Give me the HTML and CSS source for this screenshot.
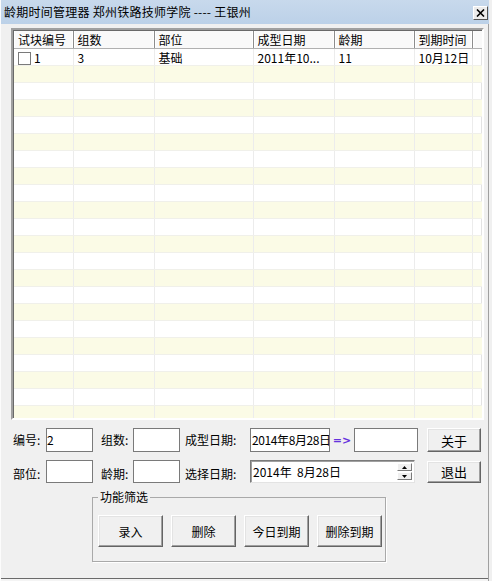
FILE: index.html
```html
<!DOCTYPE html>
<html lang="zh-CN">
<head>
  <meta charset="UTF-8">
  <title>龄期时间管理器</title>
  <link rel="stylesheet" href="styles.css">
</head>
<body>
  <div class="window">
    <div class="titlebar">
      <span class="title">龄期时间管理器 郑州铁路技师学院 ---- 王银州</span>
      <span class="close-btn">
        <svg width="9" height="8" viewBox="0 0 9 8"><path d="M1 0.5 L8 7.5 M8 0.5 L1 7.5" stroke="#000" stroke-width="1.6"/></svg>
      </span>
    </div>

    <div class="client">
      <!-- sample list -->
      <div class="listview">
        <table class="grid">
          <colgroup>
            <col style="width:59px"><col style="width:81px"><col style="width:99px">
            <col style="width:81px"><col style="width:80px"><col style="width:58px"><col>
          </colgroup>
          <thead>
            <tr><th>试块编号</th><th>组数</th><th>部位</th><th>成型日期</th><th>龄期</th><th>到期时间</th><th class="filler"></th></tr>
          </thead>
          <tbody>
            <tr><td><span class="check"></span>1</td><td>3</td><td>基础</td><td>2011年10...</td><td>11</td><td>10月12日</td><td class="filler"></td></tr>
            <tr><td></td><td></td><td></td><td></td><td></td><td></td><td class="filler"></td></tr>
            <tr><td></td><td></td><td></td><td></td><td></td><td></td><td class="filler"></td></tr>
            <tr><td></td><td></td><td></td><td></td><td></td><td></td><td class="filler"></td></tr>
            <tr><td></td><td></td><td></td><td></td><td></td><td></td><td class="filler"></td></tr>
            <tr><td></td><td></td><td></td><td></td><td></td><td></td><td class="filler"></td></tr>
            <tr><td></td><td></td><td></td><td></td><td></td><td></td><td class="filler"></td></tr>
            <tr><td></td><td></td><td></td><td></td><td></td><td></td><td class="filler"></td></tr>
            <tr><td></td><td></td><td></td><td></td><td></td><td></td><td class="filler"></td></tr>
            <tr><td></td><td></td><td></td><td></td><td></td><td></td><td class="filler"></td></tr>
            <tr><td></td><td></td><td></td><td></td><td></td><td></td><td class="filler"></td></tr>
            <tr><td></td><td></td><td></td><td></td><td></td><td></td><td class="filler"></td></tr>
            <tr><td></td><td></td><td></td><td></td><td></td><td></td><td class="filler"></td></tr>
            <tr><td></td><td></td><td></td><td></td><td></td><td></td><td class="filler"></td></tr>
            <tr><td></td><td></td><td></td><td></td><td></td><td></td><td class="filler"></td></tr>
            <tr><td></td><td></td><td></td><td></td><td></td><td></td><td class="filler"></td></tr>
            <tr><td></td><td></td><td></td><td></td><td></td><td></td><td class="filler"></td></tr>
            <tr><td></td><td></td><td></td><td></td><td></td><td></td><td class="filler"></td></tr>
            <tr><td></td><td></td><td></td><td></td><td></td><td></td><td class="filler"></td></tr>
            <tr><td></td><td></td><td></td><td></td><td></td><td></td><td class="filler"></td></tr>
            <tr><td></td><td></td><td></td><td></td><td></td><td></td><td class="filler"></td></tr>
            <tr><td></td><td></td><td></td><td></td><td></td><td></td><td class="filler"></td></tr>
            <tr><td></td><td></td><td></td><td></td><td></td><td></td><td class="filler"></td></tr>
          </tbody>
        </table>
      </div>

      <!-- entry form -->
      <div class="form-row">
        <span class="lbl lbl-first">编号:</span>
        <span class="field field-id">2</span>
        <span class="lbl lbl-mid">组数:</span>
        <span class="field"></span>
        <span class="lbl lbl-date">成型日期:</span>
        <span class="field field-made">2014年8月28日</span>
        <span class="arrow">=&gt;</span>
        <span class="field field-due"></span>
        <button class="btn btn-side">关于</button>
      </div>
      <div class="form-row row-second">
        <span class="lbl lbl-first">部位:</span>
        <span class="field"></span>
        <span class="lbl lbl-mid">龄期:</span>
        <span class="field"></span>
        <span class="lbl lbl-date">选择日期:</span>
        <span class="datepicker">
          <span class="date-text">2014年&nbsp;&nbsp;8月28日</span>
          <span class="spin">
            <span class="spin-btn"><svg width="5" height="3" viewBox="0 0 5 3"><path d="M2.5 0 L5 3 L0 3 Z" fill="#000"/></svg></span>
            <span class="spin-btn"><svg width="5" height="3" viewBox="0 0 5 3"><path d="M0 0 L5 0 L2.5 3 Z" fill="#000"/></svg></span>
          </span>
        </span>
        <button class="btn btn-side btn-quit">退出</button>
      </div>

      <fieldset class="groupbox">
        <legend>功能筛选</legend>
        <div class="group-buttons">
          <button class="btn btn-big">录入</button>
          <button class="btn btn-big">删除</button>
          <button class="btn btn-big">今日到期</button>
          <button class="btn btn-big">删除到期</button>
        </div>
      </fieldset>
    </div>
  </div>
</body>
</html>
```

FILE: styles.css
```css
html, body {
  margin: 0;
  padding: 0;
}
body {
  font-family: "SimSun", "Noto Sans CJK SC", sans-serif;
  font-size: 12px;
  color: #000;
  background: #f0f0f0;
}
.window {
  width: 492px;
  height: 581px;
  box-sizing: border-box;
  background: #f0f0f0;
  border-left: 1px solid #fcfcfc;
  border-right: 3px solid #f0f0f0;
  box-shadow: inset -1px 0 #a0a0a0, inset 0 -2px #f4f4f4, inset 0 -3px #6a6a6a;
  overflow: hidden;
}
.titlebar {
  height: 24px;
  display: flex;
  align-items: center;
  justify-content: space-between;
  padding: 0 1px 0 3px;
  background: linear-gradient(#c8d9ec, #bcd1e8);
}
.title {
  font-size: 12px;
  line-height: 14px;
  letter-spacing: 0.25px;
}
.close-btn {
  width: 15px;
  height: 14px;
  box-sizing: border-box;
  display: flex;
  align-items: center;
  justify-content: center;
  margin-top: 1px;
  background: #ececec;
  border: 1px solid;
  border-color: #fff #555 #555 #fff;
}

.client {
  padding: 4px 0 0 10px;
}
.listview {
  width: 473px;
  height: 392px;
  box-sizing: border-box;
  border: 2px solid;
  border-color: #a0a0a0 #fff #fff #a0a0a0;
  box-shadow: inset 1px 1px #696969, inset -1px -1px #e3e3e3;
  background: #fff;
  overflow: hidden;
}
.grid {
  width: 100%;
  table-layout: fixed;
  border-collapse: collapse;
  margin: 1px 0 0 1px;
}
.grid th {
  height: 17px;
  padding: 0 0 0 4px;
  text-align: left;
  font-weight: normal;
  background: #f9f9f9;
  border-right: 1px solid #8d8d8d;
  box-shadow: inset -1px 0 #fff, inset 1px 0 #fff;
  border-bottom: 1px solid #b0b0b0;
  white-space: nowrap;
  line-height: 15px;
}
.grid th.filler {
  border-right: none;
}
.grid td {
  height: 16px;
  padding: 0 0 0 4px;
  border-right: 1px solid #ececec;
  border-bottom: 1px solid #f0f0ea;
  white-space: nowrap;
  line-height: 15px;
}
.grid td.filler {
  border-right: 1px solid #e0e0e0;
}
.grid tbody tr:nth-child(even) td {
  background: #fbfbe6;
}
.check {
  display: inline-block;
  width: 11px;
  height: 11px;
  border: 1px solid #7a7a7a;
  background: #fff;
  vertical-align: -2px;
  margin-right: 3px;
}

.form-row {
  display: flex;
  align-items: center;
  height: 24px;
  margin-top: 8px;
}
.row-second {
  margin-top: 8px;
  height: 23px;
}
.lbl {
  white-space: nowrap;
  line-height: 14px;
}
.lbl-first {
  width: 33px;
  margin-left: 2px;
}
.lbl-mid {
  width: 32px;
  margin-left: 8px;
}
.lbl-date {
  width: 65px;
  margin-left: 5px;
}
.row-second .lbl {
  padding-top: 4px;
}
.field {
  width: 47px;
  height: 100%;
  box-sizing: border-box;
  border: 1px solid #7a7a7a;
  background: #fff;
  line-height: 22px;
  overflow: hidden;
  white-space: nowrap;
}
.field-made {
  width: 80px;
  letter-spacing: -0.4px;
  padding-left: 1px;
}
.field-due {
  width: 64px;
}
.arrow {
  width: 24px;
  text-align: center;
  color: #6633dd;
  font-weight: bold;
  font-family: "DejaVu Sans", sans-serif;
  font-size: 11px;
}
.datepicker {
  width: 165px;
  height: 100%;
  box-sizing: border-box;
  display: flex;
  align-items: center;
  justify-content: space-between;
  border: 1px solid;
  border-color: #7a7a7a #e3e3e3 #e3e3e3 #7a7a7a;
  box-shadow: inset 1px 1px #a0a0a0;
  background: #fff;
  padding: 0 2px 0 2px;
}
.date-text {
  white-space: nowrap;
}
.spin {
  display: flex;
  flex-direction: column;
  gap: 1px;
}
.spin-btn {
  width: 15px;
  height: 8px;
  box-sizing: border-box;
  display: flex;
  align-items: center;
  justify-content: center;
  background: #f0f0f0;
  border: 1px solid;
  border-color: #fff #7a7a7a #7a7a7a #fff;
}

.btn {
  font-family: inherit;
  font-size: 12px;
  color: #000;
  background: #f0f0f0;
  border: 1px solid;
  border-color: #fff #646464 #646464 #fff;
  box-shadow: inset -1px -1px #a0a0a0, inset 1px 1px #e3e3e3;
  padding: 0;
  margin: 0;
}
.btn-side {
  width: 54px;
  height: 24px;
  margin-left: 9px;
  font-size: 13px;
}
.btn-quit {
  margin-left: 12px;
  height: 22px;
}

.groupbox {
  width: 294px;
  box-sizing: border-box;
  margin: 7px 0 0 81px;
  padding: 0 0 14px 5px;
  border: 1px solid #a9a9a9;
  box-shadow: 1px 1px #fff;
}
.groupbox legend {
  padding: 0 2px;
  margin-left: 0;
  line-height: 14px;
}
.group-buttons {
  display: flex;
  gap: 8px;
  margin-top: 11px;
}
.btn-big {
  width: 65px;
  height: 32px;
}
```
